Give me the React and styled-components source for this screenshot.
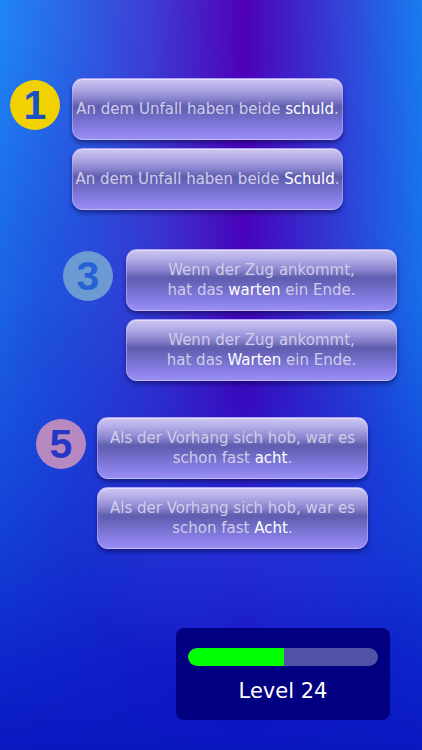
import styled, { createGlobalStyle } from "styled-components"

const GlobalStyle = createGlobalStyle`
  html, body {
    margin: 0;
    padding: 0;
  }
  body {
    font-family: "DejaVu Sans", Verdana, sans-serif;
  }
`

const Screen = styled.div`
  position: relative;
  width: 422px;
  height: 750px;
  overflow: hidden;
  display: flex;
  flex-direction: column;
  padding-top: 78px;
  box-sizing: border-box;
  background:
    radial-gradient(ellipse 260px 200px at 250px 540px, rgba(40, 90, 240, 0.45), transparent 70%),
    radial-gradient(ellipse 220px 420px at 40px 330px, rgba(20, 40, 200, 0.3), transparent 70%),
    linear-gradient(180deg, rgba(14, 24, 200, 0) 0%, rgba(14, 28, 205, 0.15) 40%, rgba(10, 22, 196, 0.85) 88%, #0a18c0 100%),
    linear-gradient(90deg, #1f86f4 0%, #2c62e4 18%, #3e3cd2 36%, #4a16c2 50%, #5000b8 58%, #4418c4 66%, #3440d6 80%, #2264e6 92%, #1a7cee 100%);
`

const Group = styled.div`
  display: flex;
  align-items: flex-start;
  gap: ${({ gap }) => gap}px;
  margin-left: ${({ indent }) => indent}px;
  margin-bottom: ${({ spacing }) => spacing}px;
`

const Badge = styled.div`
  flex: none;
  width: 50px;
  height: 50px;
  margin-top: 2px;
  border-radius: 50%;
  background: ${({ bg }) => bg};
  color: ${({ fg }) => fg};
  font-family: "Liberation Sans", Arial, sans-serif;
  font-weight: bold;
  font-size: 41px;
  line-height: 50px;
  text-align: center;
`

const Choices = styled.div`
  display: flex;
  flex-direction: column;
  gap: 8px;
`

const Choice = styled.div`
  width: 271px;
  height: 62px;
  box-sizing: border-box;
  border-radius: 11px;
  display: flex;
  align-items: center;
  justify-content: center;
  text-align: center;
  white-space: nowrap;
  font-size: 15px;
  line-height: 20px;
  color: #cfcde8;
  border: 1px solid rgba(190, 180, 255, 0.55);
  background: linear-gradient(
    180deg,
    #cdc6f2 0%,
    #b1aae6 16%,
    #8782cc 34%,
    #5f5dae 46%,
    #6864ba 55%,
    #7a74d4 72%,
    #8e84ec 90%,
    #998ef2 100%
  );
  box-shadow: 0 3px 4px rgba(0, 0, 50, 0.45), inset 0 1px 0 rgba(255, 255, 255, 0.45);
`

const Word = styled.span`
  color: #ffffff;
`

const LevelPanel = styled.div`
  margin-top: auto;
  margin-bottom: 30px;
  margin-right: 32px;
  align-self: flex-end;
  width: 214px;
  height: 92px;
  box-sizing: border-box;
  padding: 20px 12px 0;
  border-radius: 8px;
  background: #000080;
  display: flex;
  flex-direction: column;
  align-items: center;
  gap: 12px;
`

const Track = styled.div`
  width: 190px;
  height: 18px;
  border-radius: 9px;
  background: #5252a6;
  overflow: hidden;
`

const Fill = styled.div`
  height: 100%;
  background: #00ff00;
  border-radius: 9px 0 0 9px;
`

const LevelLabel = styled.div`
  color: #ffffff;
  font-size: 21px;
  line-height: 26px;
`

const groups = [
  {
    num: "1",
    bg: "#f1d200",
    fg: "#1a52c4",
    indent: 10,
    gap: 12,
    spacing: 39,
    lines: [
      ["An dem Unfall haben beide ", "schuld", "."],
      ["An dem Unfall haben beide ", "Schuld", "."],
    ],
  },
  {
    num: "3",
    bg: "#6c9ad2",
    fg: "#2363d4",
    indent: 63,
    gap: 13,
    spacing: 36,
    lines: [
      [<>Wenn der Zug ankommt,<br />hat das </>, "warten", " ein Ende."],
      [<>Wenn der Zug ankommt,<br />hat das </>, "Warten", " ein Ende."],
    ],
  },
  {
    num: "5",
    bg: "#b889c0",
    fg: "#2436c4",
    indent: 36,
    gap: 11,
    spacing: 0,
    lines: [
      [<>Als der Vorhang sich hob, war es<br />schon fast </>, "acht", "."],
      [<>Als der Vorhang sich hob, war es<br />schon fast </>, "Acht", "."],
    ],
  },
]

const App = () => {
  const progress = 50.5

  return (
    <Screen>
      <GlobalStyle />
      {groups.map((g) => (
        <Group key={g.num} indent={g.indent} gap={g.gap} spacing={g.spacing}>
          <Badge bg={g.bg} fg={g.fg}>{g.num}</Badge>
          <Choices>
            {g.lines.map(([before, word, after], i) => (
              <Choice key={i}>
                <span>
                  {before}
                  <Word>{word}</Word>
                  {after}
                </span>
              </Choice>
            ))}
          </Choices>
        </Group>
      ))}
      <LevelPanel>
        <Track>
          <Fill style={{ width: `${progress}%` }} />
        </Track>
        <LevelLabel>Level 24</LevelLabel>
      </LevelPanel>
    </Screen>
  )
}

export default App
